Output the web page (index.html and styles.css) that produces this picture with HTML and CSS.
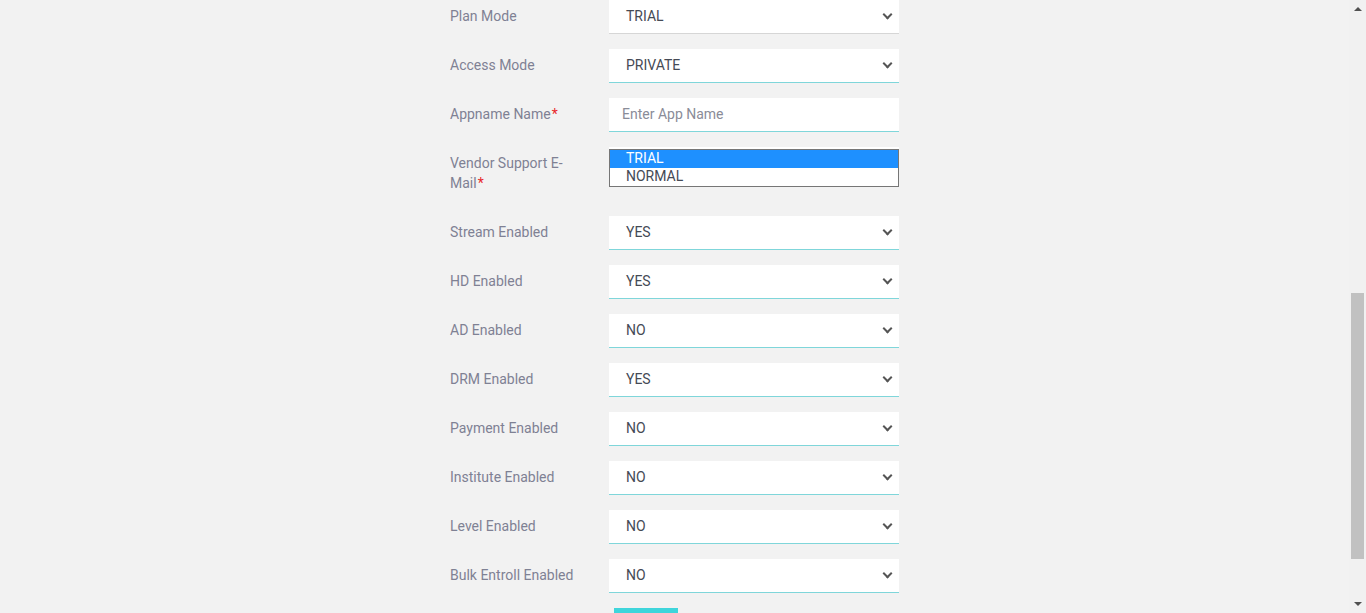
FILE: index.html
```html
<!DOCTYPE html>
<html lang="en">
<head>
<meta charset="utf-8">
<title>App Form</title>
<link rel="stylesheet" href="styles.css">
</head>
<body>
<div class="page">
  <main class="main">
    <form class="form">
      <div class="row">
        <label class="label">Plan Mode</label>
        <div class="field"><div class="control select grey">TRIAL<span class="chev"></span></div></div>
      </div>
      <div class="row">
        <label class="label">Access Mode</label>
        <div class="field"><div class="control select">PRIVATE<span class="chev"></span></div></div>
      </div>
      <div class="row">
        <label class="label">Appname Name<span class="req">*</span></label>
        <div class="field"><div class="control placeholder">Enter App Name</div></div>
      </div>
      <div class="row">
        <label class="label">Vendor Support E-Mail<span class="req">*</span></label>
        <div class="field">
          <div class="control"></div>
          <ul class="listbox">
            <li class="opt active">TRIAL</li>
            <li class="opt">NORMAL</li>
          </ul>
        </div>
      </div>
      <div class="row">
        <label class="label">Stream Enabled</label>
        <div class="field"><div class="control select">YES<span class="chev"></span></div></div>
      </div>
      <div class="row">
        <label class="label">HD Enabled</label>
        <div class="field"><div class="control select">YES<span class="chev"></span></div></div>
      </div>
      <div class="row">
        <label class="label">AD Enabled</label>
        <div class="field"><div class="control select">NO<span class="chev"></span></div></div>
      </div>
      <div class="row">
        <label class="label">DRM Enabled</label>
        <div class="field"><div class="control select">YES<span class="chev"></span></div></div>
      </div>
      <div class="row">
        <label class="label">Payment Enabled</label>
        <div class="field"><div class="control select">NO<span class="chev"></span></div></div>
      </div>
      <div class="row">
        <label class="label">Institute Enabled</label>
        <div class="field"><div class="control select">NO<span class="chev"></span></div></div>
      </div>
      <div class="row">
        <label class="label">Level Enabled</label>
        <div class="field"><div class="control select">NO<span class="chev"></span></div></div>
      </div>
      <div class="row">
        <label class="label">Bulk Entroll Enabled</label>
        <div class="field"><div class="control select">NO<span class="chev"></span></div></div>
      </div>
      <div class="actions"><button type="button" class="btn"></button></div>
    </form>
  </main>
  <div class="scrollbar">
    <span class="arrow up"></span>
    <span class="thumb"></span>
    <span class="arrow down"></span>
  </div>
</div>
</body>
</html>
```
FILE: styles.css
```css
html, body {
  margin: 0;
  padding: 0;
  height: 613px;
  overflow: hidden;
  background: #f2f2f2;
  font-family: Roboto, "Liberation Sans", Arial, sans-serif;
}
.page {
  display: flex;
  height: 613px;
}
.main {
  flex: 1;
  overflow: hidden;
}
.form {
  margin: 0 0 0 450px;
  width: 449px;
  display: flex;
  flex-direction: column;
  gap: 15px;
}
.row {
  display: flex;
  align-items: stretch;
}
.label {
  width: 144px;
  padding: 6px 15px 8px 0;
  font-size: 14px;
  line-height: 20px;
  color: #7f8194;
}
.req {
  color: #e8262a;
  margin-left: 1px;
}
.field {
  width: 290px;
  position: relative;
}
.control {
  box-sizing: border-box;
  height: 34px;
  background: #fff;
  border-bottom: 1px solid #7fd6da;
  padding: 0 0 0 17px;
  font-size: 14px;
  line-height: 33px;
  color: #454a55;
  position: relative;
}
.control.grey {
  border-bottom-color: #d6d6d6;
}
.placeholder {
  color: #8a8c98;
  padding-left: 13px;
}
.chev {
  position: absolute;
  right: 8px;
  top: 11px;
  width: 5px;
  height: 5px;
  border-right: 2px solid #555;
  border-bottom: 2px solid #555;
  transform: rotate(45deg);
}
.listbox {
  position: absolute;
  top: 2px;
  left: 0;
  width: 290px;
  box-sizing: border-box;
  margin: 0;
  padding: 0;
  list-style: none;
  background: #fff;
  border: 1px solid #767676;
  font-size: 14px;
}
.opt {
  height: 18px;
  line-height: 17px;
  padding-left: 16px;
  color: #454a55;
}
.opt.active {
  background: #1e90ff;
  color: #fff;
}
.actions {
  padding-left: 164px;
}
.btn {
  display: block;
  width: 64px;
  height: 34px;
  border: 0;
  background: #3fd5db;
  padding: 0;
}
.scrollbar {
  width: 17px;
  background: #f1f1f1;
  display: flex;
  flex-direction: column;
  align-items: center;
}
.thumb {
  display: block;
  width: 13px;
  height: 266px;
  margin-top: 282px;
  background: #c1c1c1;
}
.arrow {
  display: block;
  width: 0;
  height: 0;
  border-left: 4px solid transparent;
  border-right: 4px solid transparent;
}
.arrow.up {
  margin-top: 7px;
  border-bottom: 4px solid #505050;
}
.arrow.down {
  margin-top: auto;
  margin-bottom: 7px;
  border-top: 4px solid #505050;
}
```
